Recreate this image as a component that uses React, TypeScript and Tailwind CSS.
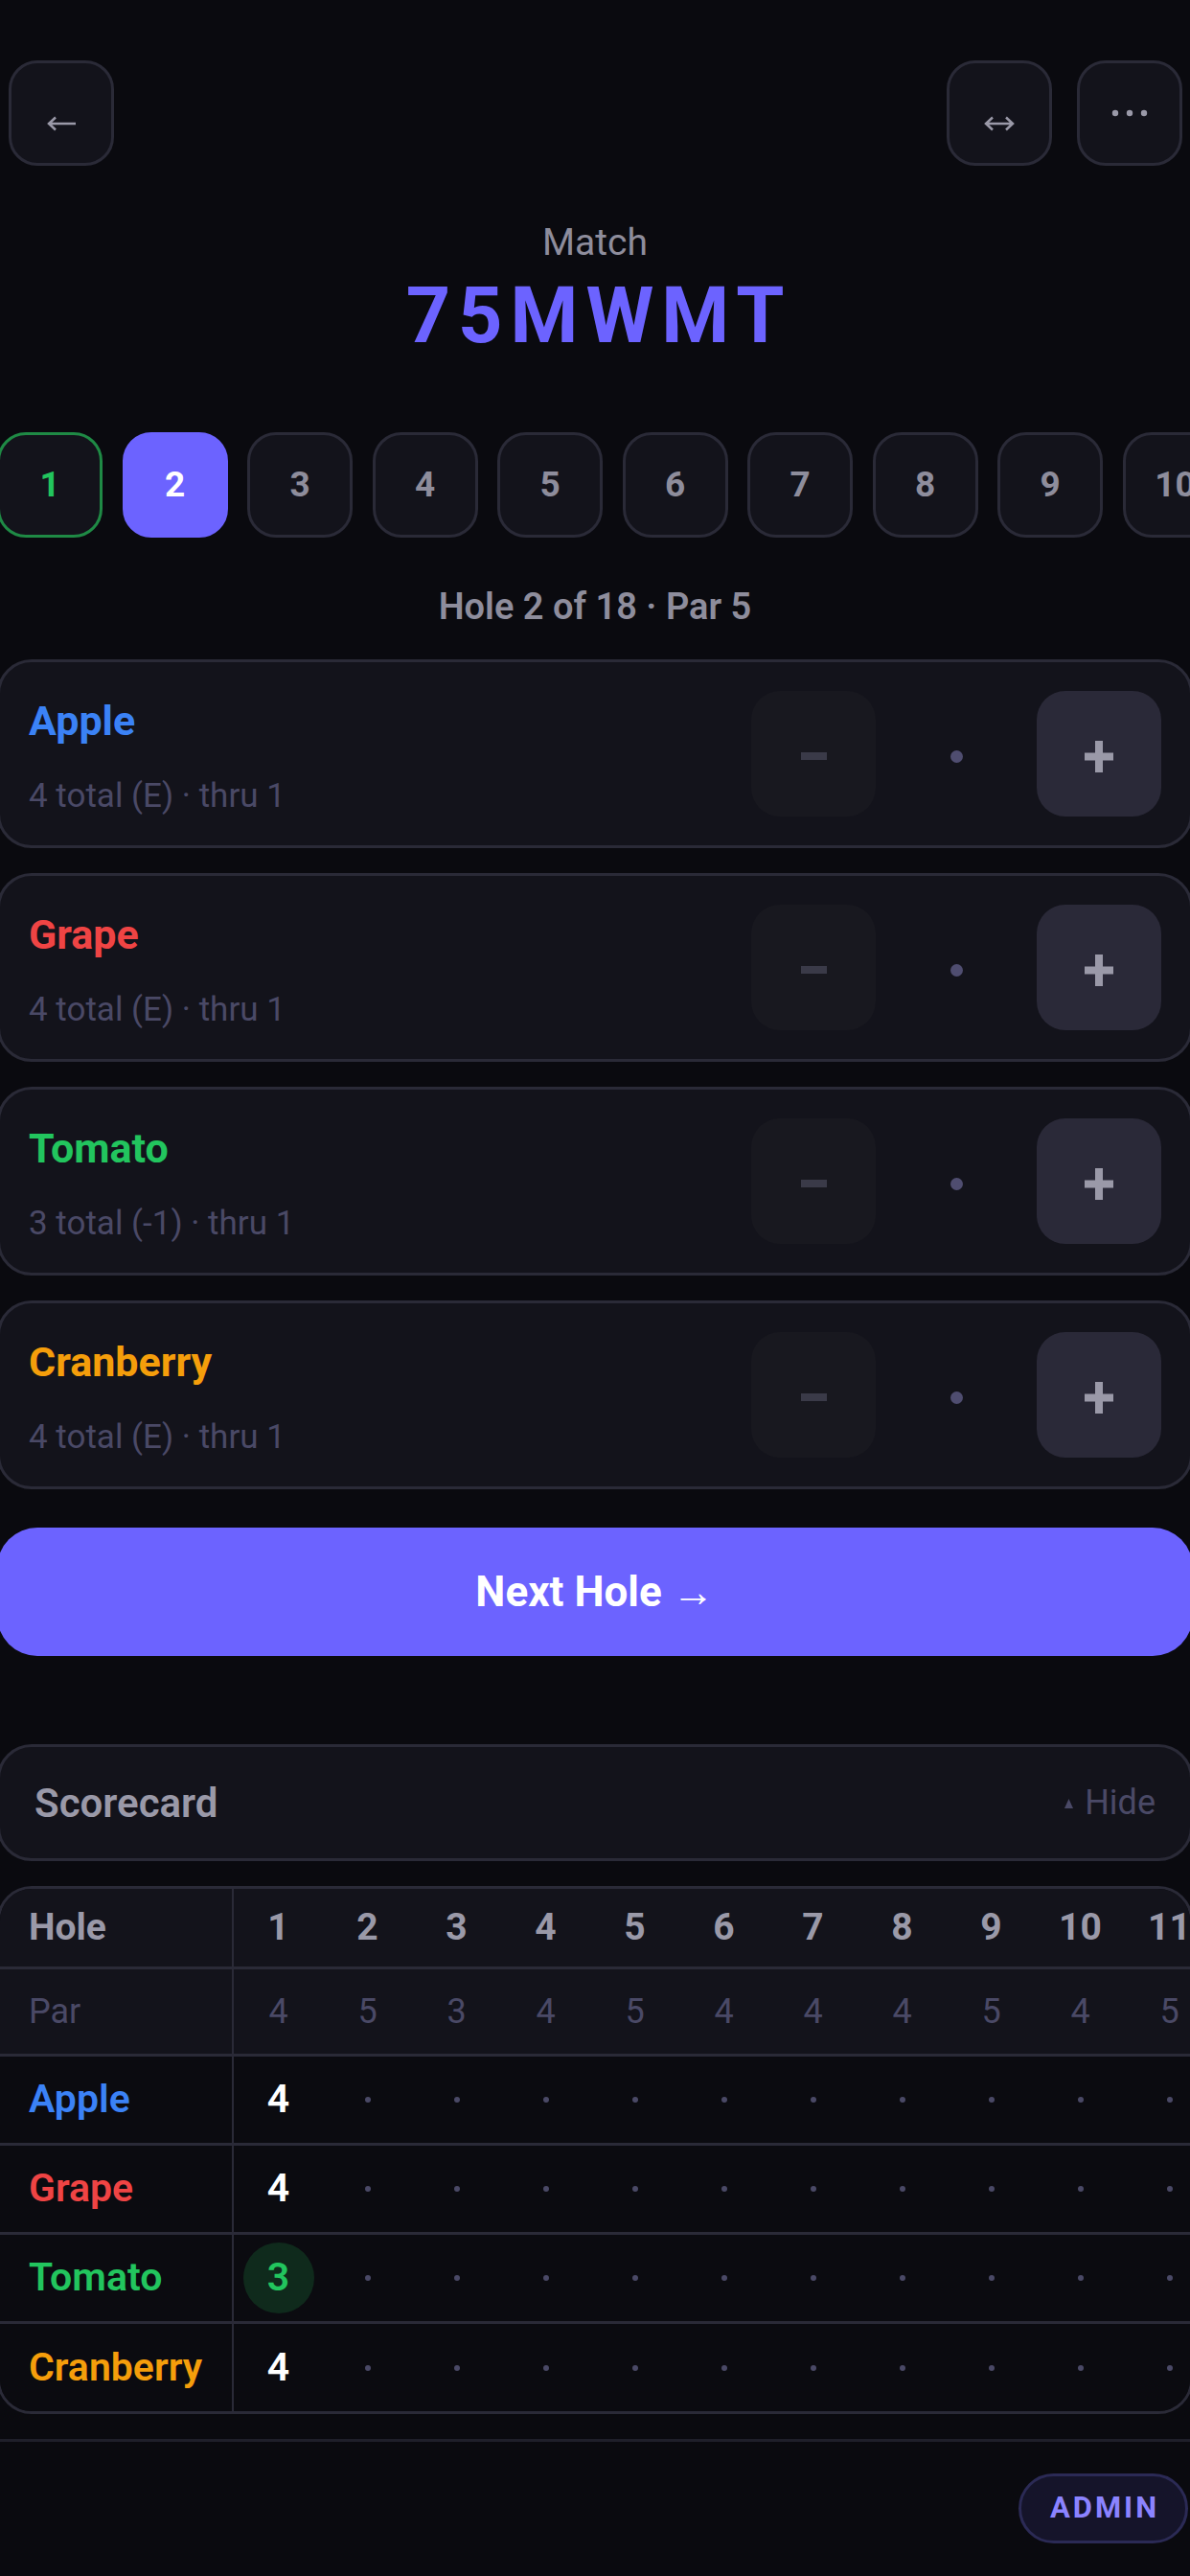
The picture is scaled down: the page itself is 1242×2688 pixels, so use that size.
const players = [
  { name: "Apple", color: "text-[#3b82f6]", sub: "4 total (E) · thru 1", score: 4 },
  { name: "Grape", color: "text-[#ef4444]", sub: "4 total (E) · thru 1", score: 4 },
  { name: "Tomato", color: "text-[#22c55e]", sub: "3 total (-1) · thru 1", score: 3, birdie: true },
  { name: "Cranberry", color: "text-[#f59e0b]", sub: "4 total (E) · thru 1", score: 4 },
];

const pars = [4, 5, 3, 4, 5, 4, 4, 4, 5, 4, 5, 3, 4, 4, 3, 5, 4, 4];
const holes = pars.map((_, i) => i + 1);

function IconButton({ children }: { children: React.ReactNode }) {
  return (
    <button className="flex h-[110px] w-[110px] items-center justify-center rounded-[30px] border-[3px] border-[#2a2a37] bg-[#13131b]">
      {children}
    </button>
  );
}

function PlayerCard({ p }: { p: (typeof players)[number] }) {
  return (
    <div className="flex items-start justify-between rounded-[36px] border-[3px] border-[#2a2a37] bg-[#13131b] p-[30px]">
      <div className="flex flex-col">
        <div className={`mt-[6px] text-[43px] font-bold leading-[50px] ${p.color}`}>{p.name}</div>
        <div className="mt-[32px] text-[35px] leading-[43px] text-[#4a4966]">{p.sub}</div>
      </div>
      <div className="flex items-center">
        <button className="flex h-[131px] w-[130px] items-center justify-center rounded-[30px] bg-[#18181f]">
          <span className="mt-[4px] block h-[8px] w-[27px] bg-[#3a3a48]" />
        </button>
        <div className="flex w-[168px] justify-center">
          <span className="mt-[6px] block h-[13px] w-[13px] rounded-full bg-[#4f4d70]" />
        </div>
        <button className="flex h-[131px] w-[130px] items-center justify-center rounded-[30px] bg-[#2a2938]">
          <svg width="30" height="33" viewBox="0 0 30 33" className="mt-[6px]">
            <rect x="0" y="12.5" width="30" height="8" fill="#9a99a8" />
            <rect x="11" y="0" width="8" height="33" fill="#9a99a8" />
          </svg>
        </button>
      </div>
    </div>
  );
}

export default function App() {
  return (
    <div className="min-h-[2688px] w-full overflow-hidden bg-[#0a0a0f] font-['Roboto',sans-serif]">
      <div className="-ml-[3px] w-[1248px] pb-[29px] pt-[63px]">
        {/* top bar */}
        <div className="flex items-center justify-between pl-[12px] pr-[11px]">
          <IconButton>
            <svg width="32" height="16" viewBox="0 0 32 16" className="ml-[1px] translate-y-[11px]" fill="none" stroke="#9a99a8" strokeWidth="2.5">
              <path d="M2 8 H30 M9 1.5 L2 8 L9 14.5" />
            </svg>
          </IconButton>
          <div className="flex gap-[26px]">
            <IconButton>
              <svg width="32" height="16" viewBox="0 0 32 16" className="translate-y-[11px]" fill="none" stroke="#9a99a8" strokeWidth="2.5">
                <path d="M2 8 H30 M9 1.5 L2 8 L9 14.5 M23 1.5 L30 8 L23 14.5" />
              </svg>
            </IconButton>
            <IconButton>
              <svg width="40" height="8" viewBox="0 0 40 8">
                <circle cx="5" cy="4" r="3.2" fill="#9a99a8" />
                <circle cx="20" cy="4" r="3.2" fill="#9a99a8" />
                <circle cx="35" cy="4" r="3.2" fill="#9a99a8" />
              </svg>
            </IconButton>
          </div>
        </div>

        {/* title */}
        <div className="mt-[57px] text-center">
          <div className="text-[39px] leading-[46px] text-[#8e8d9c]">Match</div>
          <div className="mt-[6px] pl-[8px] text-[81px] font-bold leading-[96px] tracking-[8px] text-[#6c63ff]">75MWMT</div>
        </div>

        {/* hole pills */}
        <div className="mt-[73px] flex gap-[20.5px] overflow-hidden">
          {holes.map((h) => (
            <div
              key={h}
              className={
                h === 1
                  ? "flex h-[110px] w-[110px] shrink-0 items-center justify-center rounded-[30px] border-[3px] border-[#1f8a45] bg-[#13131b] text-[37px] font-bold text-[#22c55e]"
                  : h === 2
                  ? "flex h-[110px] w-[110px] shrink-0 items-center justify-center rounded-[30px] border-[3px] border-[#6c63ff] bg-[#6c63ff] text-[37px] font-bold text-white"
                  : "flex h-[110px] w-[110px] shrink-0 items-center justify-center rounded-[30px] border-[3px] border-[#2a2a37] bg-[#13131b] text-[37px] font-bold text-[#8e8d9c]"
              }
            >
              {h}
            </div>
          ))}
        </div>

        <div className="mt-[49px] text-center text-[38px] font-semibold leading-[46px] text-[#8e8d9c]">Hole 2 of 18 · Par 5</div>

        {/* players */}
        <div className="mt-[32px] flex flex-col gap-[26px]">
          {players.map((p) => (
            <PlayerCard key={p.name} p={p} />
          ))}
        </div>

        <button className="mt-[40px] flex h-[134px] w-full items-center justify-center rounded-[42px] bg-[#6c63ff] text-[44px] font-bold text-white">
          Next Hole →
        </button>

        {/* scorecard */}
        <div className="mt-[92px] flex h-[122px] items-center justify-between rounded-[36px] border-[3px] border-[#2a2a37] bg-[#13131b] px-[36px]">
          <span className="text-[42px] font-semibold text-[#9a99a8]">Scorecard</span>
          <span className="flex items-center gap-[12px] text-[36px] text-[#4a4966]">
            <svg width="9" height="10" viewBox="0 0 9 10" className="mt-[2px]">
              <path d="M4.5 0 L9 10 H0 Z" fill="#4a4966" />
            </svg>
            Hide
          </span>
        </div>

        <div className="mt-[26px] overflow-hidden rounded-[36px] border-[3px] border-[#2a2a37]">
          <div className="w-max">
            <div className="flex h-[84px] border-b-[3px] border-[#2a2a37] bg-[#13131b] text-[39px] font-bold text-[#9a99a8]">
              <div className="flex w-[244px] shrink-0 items-center border-r-2 border-[#2a2a37] pl-[30px]">Hole</div>
              {holes.map((h) => (
                <div key={h} className="flex w-[93px] shrink-0 items-center justify-center">{h}</div>
              ))}
            </div>
            <div className="flex h-[91px] border-b-[3px] border-[#2a2a37] bg-[#13131b] text-[36px] text-[#4a4966]">
              <div className="flex w-[244px] shrink-0 items-center border-r-2 border-[#2a2a37] pl-[30px]">Par</div>
              {pars.map((v, i) => (
                <div key={i} className="flex w-[93px] shrink-0 items-center justify-center">{v}</div>
              ))}
            </div>
            {players.map((p, idx) => (
              <div
                key={p.name}
                className={
                  idx < players.length - 1
                    ? "flex h-[93px] border-b-[3px] border-[#2a2a37] bg-[#0b0b10]"
                    : "flex h-[91px] bg-[#0b0b10]"
                }
              >
                <div className={`flex w-[244px] shrink-0 items-center border-r-2 border-[#2a2a37] pl-[30px] text-[41px] font-semibold ${p.color}`}>
                  {p.name}
                </div>
                {holes.map((h) => (
                  <div key={h} className="flex w-[93px] shrink-0 items-center justify-center">
                    {h === 1 ? (
                      p.birdie ? (
                        <span className="flex h-[74px] w-[74px] items-center justify-center rounded-full bg-[#0f2a1c] text-[41px] font-semibold text-[#22c55e]">
                          {p.score}
                        </span>
                      ) : (
                        <span className="text-[41px] font-semibold text-white">{p.score}</span>
                      )
                    ) : (
                      <span className="block h-[6px] w-[6px] rounded-full bg-[#4a4966]" />
                    )}
                  </div>
                ))}
              </div>
            ))}
          </div>
        </div>

        <div className="mt-[26px] border-t-[3px] border-[#1f1f2a]" />

        <div className="mt-[33px] flex justify-end pr-[5px]">
          <span className="flex h-[73px] w-[177px] items-center justify-center rounded-full border-[3px] border-[#2b2a55] bg-[#15142a] pl-[3px] text-[31px] font-bold tracking-[3px] text-[#8b83ff]">
            ADMIN
          </span>
        </div>
      </div>
    </div>
  );
}
